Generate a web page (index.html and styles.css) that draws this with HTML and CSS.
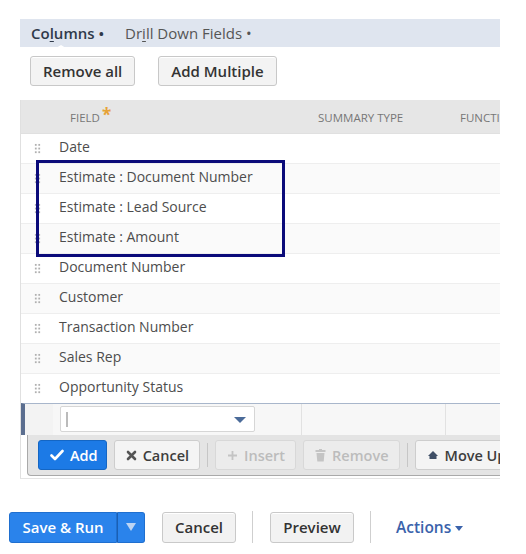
FILE: index.html
```html
<!DOCTYPE html>
<html>
<head>
<meta charset="utf-8">
<link rel="stylesheet" href="styles.css">
</head>
<body>
<div class="panel">
  <div class="tabs">
    <span class="tab active">Co<u>l</u>umns •</span>
    <span class="tab">Dr<u>i</u>ll Down Fields •</span>
  </div>
  <div class="toolbar">
    <button class="btn">Remove all</button>
    <button class="btn">Add Multiple</button>
  </div>
  <div class="table">
    <div class="row head">
      <div class="cell c1">FIELD<span class="star">*</span></div>
      <div class="cell c2">SUMMARY TYPE</div>
      <div class="cell c3">FUNCTI</div>
    </div>
    <div class="row"><div class="cell c1"><span class="grip"></span>Date</div><div class="cell"></div><div class="cell"></div></div>
    <div class="row alt"><div class="cell c1"><span class="grip"></span>Estimate : Document Number</div><div class="cell"></div><div class="cell"></div></div>
    <div class="row"><div class="cell c1"><span class="grip"></span>Estimate : Lead Source</div><div class="cell"></div><div class="cell"></div></div>
    <div class="row alt"><div class="cell c1"><span class="grip"></span>Estimate : Amount</div><div class="cell"></div><div class="cell"></div></div>
    <div class="row"><div class="cell c1"><span class="grip"></span>Document Number</div><div class="cell"></div><div class="cell"></div></div>
    <div class="row alt"><div class="cell c1"><span class="grip"></span>Customer</div><div class="cell"></div><div class="cell"></div></div>
    <div class="row"><div class="cell c1"><span class="grip"></span>Transaction Number</div><div class="cell"></div><div class="cell"></div></div>
    <div class="row alt"><div class="cell c1"><span class="grip"></span>Sales Rep</div><div class="cell"></div><div class="cell"></div></div>
    <div class="row"><div class="cell c1"><span class="grip"></span>Opportunity Status</div><div class="cell"></div><div class="cell"></div></div>
    <div class="editrow">
      <div class="ecell e0"></div>
      <div class="ecell e1">
        <div class="select"><span class="cursor"></span><span class="caret"></span></div>
      </div>
      <div class="ecell e2"></div>
      <div class="ecell e3"></div>
    </div>
    <div class="actionbar">
      <button class="abtn primary"><svg width="14" height="12" viewBox="0 0 14 12"><path d="M1.5 6.5 L5 10 L12.5 2" fill="none" stroke="#fff" stroke-width="2.6" stroke-linecap="round" stroke-linejoin="round"/></svg>Add</button>
      <button class="abtn"><svg width="11" height="11" viewBox="0 0 11 11"><path d="M2 2 L9 9 M9 2 L2 9" stroke="#555" stroke-width="2.6" stroke-linecap="round"/></svg>Cancel</button>
      <span class="sep"></span>
      <button class="abtn disabled"><svg width="11" height="11" viewBox="0 0 11 11"><path d="M5.5 1 V10 M1 5.5 H10" stroke="#c4c4c4" stroke-width="1.8"/></svg>Insert</button>
      <button class="abtn disabled"><svg width="11" height="13" viewBox="0 0 11 13"><rect x="0.5" y="1" width="10" height="2" fill="#c4c4c4"/><rect x="4" y="0" width="3" height="1.5" fill="#c4c4c4"/><path d="M1.5 4 H9.5 L8.7 12.5 H2.3 Z" fill="#c4c4c4"/></svg>Remove</button>
      <span class="sep"></span>
      <button class="abtn"><svg width="12" height="10" viewBox="0 0 12 10"><path d="M6 1 L11 6 H1 Z" fill="#3f4f66"/><rect x="2.5" y="6" width="7" height="3" fill="#3f4f66"/></svg>Move Up</button>
    </div>
  </div>
  <div class="highlight"></div>
</div>
<div class="footer">
  <div class="split">
    <button class="fbtn blue">Save &amp; Run</button><button class="fbtn blue arrow"><span class="tri"></span></button>
  </div>
  <button class="fbtn cancel">Cancel</button>
  <span class="fsep"></span>
  <button class="fbtn preview">Preview</button>
  <span class="fsep"></span>
  <span class="actions">Actions<span class="dcaret"></span></span>
</div>
</body>
</html>
```

FILE: styles.css
```css
* { box-sizing: border-box; }
body {
  margin: 0;
  width: 526px;
  height: 554px;
  overflow: hidden;
  background: #fff;
  font-family: "Open Sans", "Liberation Sans", sans-serif;
  color: #444;
}
button { font-family: inherit; cursor: pointer; }

.panel {
  position: relative;
  margin: 19px 0 0 20px;
  width: 480px;
  overflow: hidden;
}

.tabs {
  position: relative;
  height: 28px;
  background: #dfe5ef;
  display: flex;
  align-items: center;
  padding-left: 11px;
  gap: 21px;
  font-size: 15px;
}
.tab { color: #555; white-space: nowrap; }
.tab.active { color: #2f3a4a; font-weight: 600; position: relative; }
.tab u { text-decoration-thickness: 1px; text-underline-offset: 2px; }
.tab.active::after {
  content: "";
  position: absolute;
  left: 22px;
  top: 22px;
  border-left: 8px solid transparent;
  border-right: 8px solid transparent;
  border-bottom: 5px solid #fff;
}

.toolbar {
  display: flex;
  gap: 23px;
  margin: 9px 0 14px 10px;
}
.btn {
  height: 30px;
  padding: 0 12px;
  font-size: 15px;
  font-weight: 600;
  color: #333;
  background: #f3f3f3;
  border: 1px solid #c8c8c8;
  border-radius: 3px;
  box-shadow: inset 0 1px 0 #fff;
}

.table {
  border-left: 1px solid #e0e0e0;
  border-bottom: 1px solid #e4e4e4;
  padding-bottom: 2px;
}
.row {
  display: grid;
  grid-template-columns: 279px 144px 1fr;
  height: 30px;
  border-bottom: 1px solid #eeeeee;
  background: #fff;
}
.row.alt { background: #fafafa; }
.cell {
  display: flex;
  align-items: flex-start;
  padding-top: 3px;
  line-height: 20px;
  font-size: 14px;
  color: #4d4d4d;
  white-space: nowrap;
  overflow: hidden;
}
.c1 { padding-left: 13px; }
.grip {
  width: 7px;
  height: 11px;
  margin: 6px 18px 0 0;
  flex: none;
  background-image: radial-gradient(circle, #b0b0b0 1.1px, transparent 1.4px);
  background-size: 3.5px 3.7px;
  background-position: 0 0;
}
.row.head {
  height: 34px;
  background: #e6e6e6;
  border-bottom: 1px solid #e0e0e0;
}
.row.head .cell {
  align-items: center;
  padding-top: 3px;
  font-size: 11.5px;
  color: #777;
}
.row.head .c1 { padding-left: 49px; }
.row.head .c2 { padding-left: 18px; }
.row.head .c3 { padding-left: 16px; }
.star {
  color: #e6a236;
  font-size: 17px;
  font-weight: 700;
  margin: -7px 0 0 2px;
}

.editrow {
  display: grid;
  grid-template-columns: 28px 248px 144px 1fr;
  height: 32px;
  margin-top: -1px;
  border-top: 1px solid #a8b6cb;
  border-left: 4px solid #5b6e8f;
  background: #f7f7f7;
}
.ecell { height: 100%; }
.e0 { background: #f3f3f3; }
.e1 { padding: 2px 0 0 7px; }
.e2, .e3 { border-left: 1px solid #e2e2e2; }
.select {
  position: relative;
  width: 195px;
  height: 26px;
  background: #fff;
  border: 1px solid #d6d6d6;
  border-radius: 2px;
}
.cursor {
  position: absolute;
  left: 5px;
  top: 5px;
  width: 2px;
  height: 15px;
  background: #bbb;
}
.caret {
  position: absolute;
  right: 8px;
  top: 10px;
  border-left: 6px solid transparent;
  border-right: 6px solid transparent;
  border-top: 6px solid #4b6b99;
}

.actionbar {
  display: flex;
  align-items: center;
  gap: 7px;
  margin-left: 6px;
  height: 41px;
  padding: 0 0 0 10px;
  background: #e4e4e4;
  border-left: 1px solid #a9a9a9;
  border-bottom: 1px solid #a9a9a9;
  border-bottom-left-radius: 4px;
  white-space: nowrap;
  overflow: hidden;
}
.abtn {
  flex: none;
  display: flex;
  align-items: center;
  gap: 6px;
  height: 30px;
  padding: 0 10px 0 11px;
  font-size: 14.5px;
  font-weight: 600;
  color: #3d3d3d;
  background: #f4f4f4;
  border: 1px solid #cdcdcd;
  border-radius: 3px;
}
.abtn.primary {
  background: #1c7ae6;
  border-color: #1466c4;
  color: #fff;
  padding: 0 8px 0 11px;
}
.abtn.disabled { color: #bcbcbc; background: #ececec; border-color: #d8d8d8; }
.sep {
  flex: none;
  width: 1px;
  height: 24px;
  background: #c6c6c6;
}

.highlight {
  position: absolute;
  left: 16px;
  top: 141px;
  width: 249px;
  height: 97px;
  border: 3px solid #0b0b7a;
  pointer-events: none;
}

.footer {
  display: flex;
  align-items: center;
  margin: 32px 0 0 9px;
}
.split { display: flex; margin-right: 17px; }
.fbtn {
  height: 31px;
  padding: 0;
  font-size: 15px;
  font-weight: 600;
  color: #333;
  background: #f2f2f2;
  border: 1px solid #c9c9c9;
  border-radius: 3px;
  box-shadow: inset 0 1px 0 #fff;
}
.fbtn.blue {
  width: 108px;
  background: #2a83eb;
  border-color: #1f6fcf;
  color: #fff;
  border-radius: 3px 0 0 3px;
  box-shadow: none;
}
.fbtn.arrow {
  width: 28px;
  border-left: 1px solid #1a5fb3;
  border-radius: 0 3px 3px 0;
  display: flex;
  align-items: center;
  justify-content: center;
}
.tri {
  border-left: 5px solid transparent;
  border-right: 5px solid transparent;
  border-top: 8px solid #bcd4f3;
}
.fbtn.cancel { width: 74px; }
.fbtn.preview { width: 84px; }
.fsep {
  width: 1px;
  height: 32px;
  background: #cfcfcf;
  margin: 0 17px 0 16px;
}
.actions {
  margin-left: 8px;
  font-size: 15.5px;
  font-weight: 600;
  color: #3a62ab;
  display: flex;
  align-items: center;
}
.dcaret {
  margin: 2px 0 0 4px;
  border-left: 4px solid transparent;
  border-right: 4px solid transparent;
  border-top: 5px solid #3a62ab;
}
```
